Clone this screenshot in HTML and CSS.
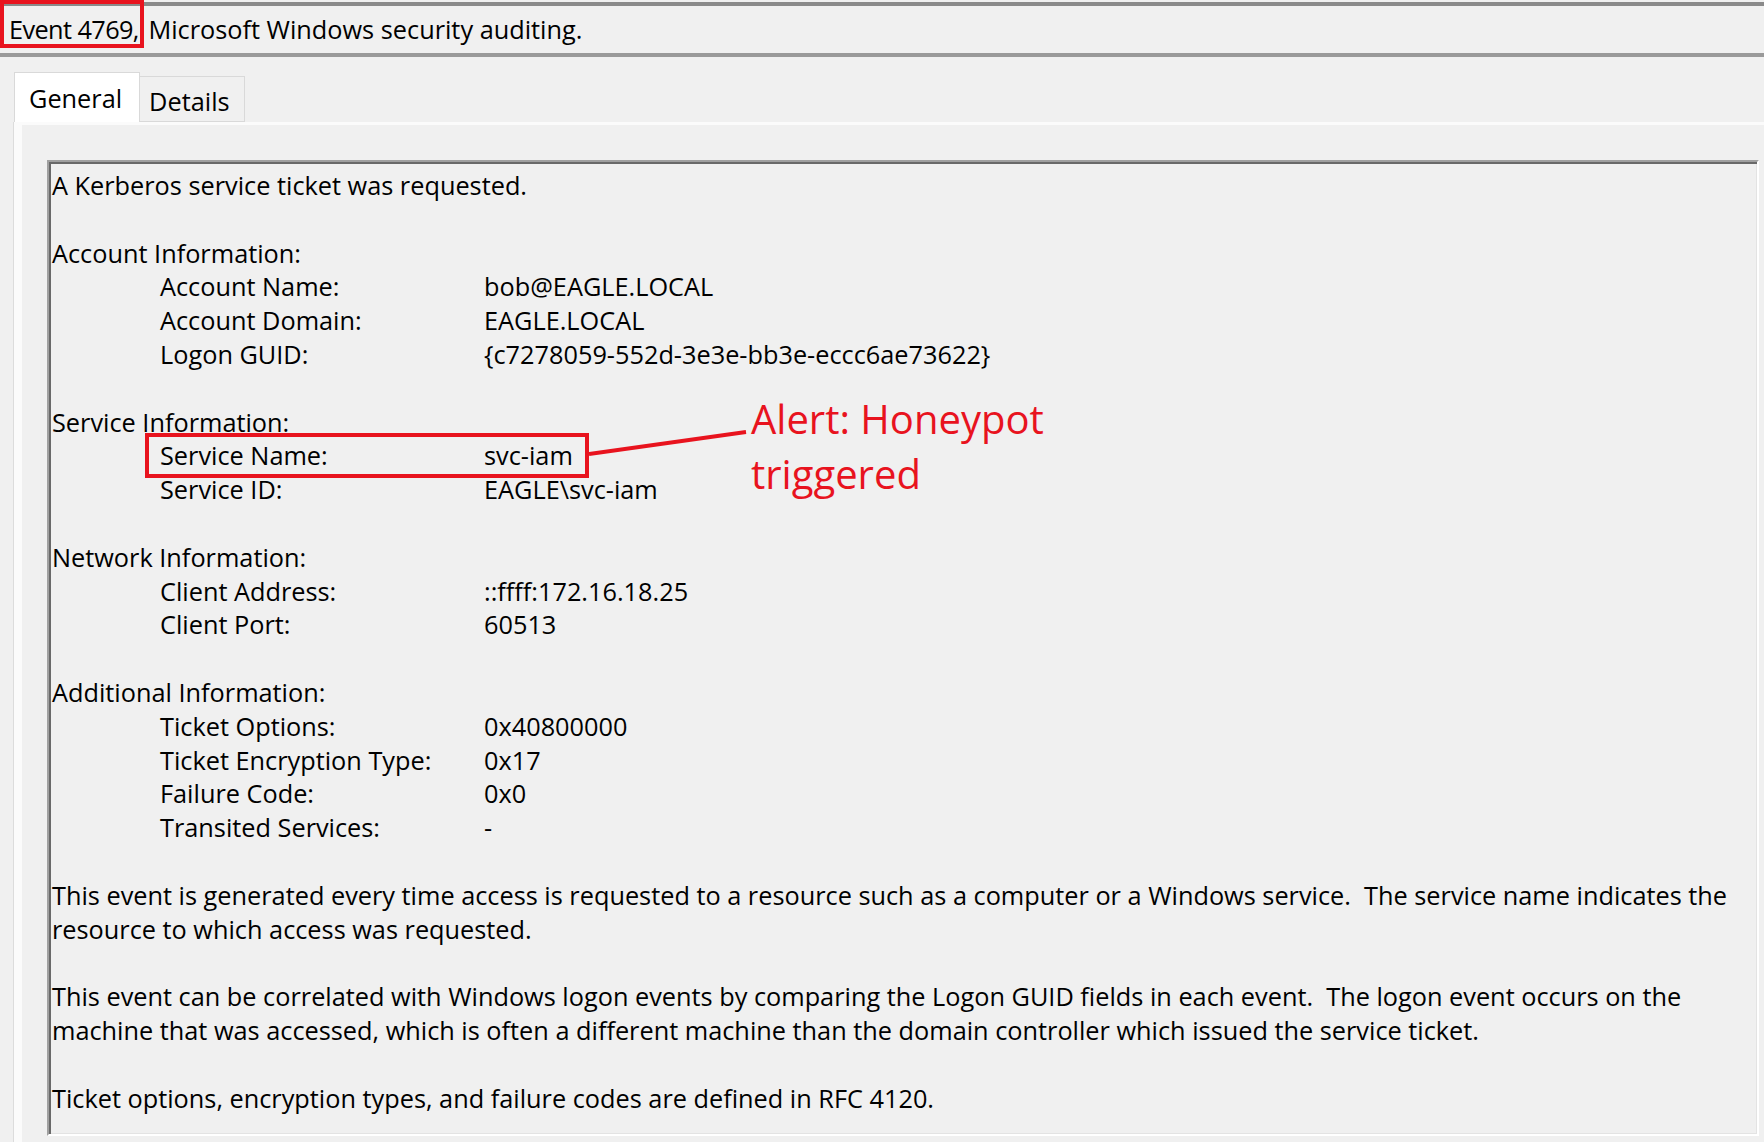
FILE: index.html
```html
<!DOCTYPE html>
<html lang="en">
<head>
    <meta charset="UTF-8">
    <title>Event 4769 - Properties</title>
    <link rel="stylesheet" href="styles.css">
</head>
<body>
    <div class="caption">
        <span class="event-id">Event 4769,</span> Microsoft Windows security auditing.
        <div class="mark"></div>
    </div>

    <div class="tabs">
        <div class="tab active">General</div>
        <div class="tab">Details</div>
    </div>

    <div class="page">
        <div class="panel">
            <div class="msg">
                <div class="line">A Kerberos service ticket was requested.</div>
                <div class="gap"></div>

                <div class="line">Account Information:</div>
                <div class="field"><span>Account Name:</span><span>bob@EAGLE.LOCAL</span></div>
                <div class="field"><span>Account Domain:</span><span>EAGLE.LOCAL</span></div>
                <div class="field"><span>Logon GUID:</span><span>{c7278059-552d-3e3e-bb3e-eccc6ae73622}</span></div>
                <div class="gap"></div>

                <div class="line">Service Information:</div>
                <div class="field flag"><span>Service Name:</span><span>svc-iam</span></div>
                <div class="field"><span>Service ID:</span><span>EAGLE\svc-iam</span></div>
                <div class="gap"></div>

                <div class="line">Network Information:</div>
                <div class="field"><span>Client Address:</span><span>::ffff:172.16.18.25</span></div>
                <div class="field"><span>Client Port:</span><span>60513</span></div>
                <div class="gap"></div>

                <div class="line">Additional Information:</div>
                <div class="field"><span>Ticket Options:</span><span>0x40800000</span></div>
                <div class="field"><span>Ticket Encryption Type:</span><span>0x17</span></div>
                <div class="field"><span>Failure Code:</span><span>0x0</span></div>
                <div class="field"><span>Transited Services:</span><span>-</span></div>
                <div class="gap"></div>

                <div class="line">This event is generated every time access is requested to a resource such as a computer or a Windows service.  The service name indicates the</div>
                <div class="line">resource to which access was requested.</div>
                <div class="gap"></div>

                <div class="line">This event can be correlated with Windows logon events by comparing the Logon GUID fields in each event.  The logon event occurs on the</div>
                <div class="line">machine that was accessed, which is often a different machine than the domain controller which issued the service ticket.</div>
                <div class="gap"></div>

                <div class="line">Ticket options, encryption types, and failure codes are defined in RFC 4120.</div>

                <!-- annotation drawn over the message -->
                <svg class="callout-line" width="160" height="26" viewBox="0 0 160 26">
                    <line x1="0" y1="24" x2="157" y2="2" stroke="#e8131e" stroke-width="4"/>
                </svg>
                <div class="callout">Alert: Honeypot<br>triggered</div>
            </div>
        </div>
    </div>
</body>
</html>
```

FILE: styles.css
```css
body {
    margin: 0;
    background: #f0f0f0;
    font-family: "Open Sans", "Noto Sans", sans-serif;
    font-size: 25.3px;
    color: #000;
    overflow: hidden;
}

.caption {
    position: relative;
    margin-top: 2px;
    height: 47px;
    line-height: 47px;
    padding-left: 9px;
    border-top: 4px solid #8a8a8a;
    border-bottom: 4px solid #9a9a9a;
    white-space: nowrap;
}
.event-id {
    letter-spacing: -0.6px;
    margin-right: 3px;
}
.mark {
    position: absolute;
    left: 0;
    top: -6px;
    width: 144px;
    height: 48px;
    box-sizing: border-box;
    border: 4px solid #e8131e;
}

.tabs {
    display: flex;
    align-items: flex-start;
    margin: 15px 0 0 14px;
}
.tab {
    box-sizing: border-box;
    height: 46px;
    margin-top: 4px;
    padding: 0 14px 0 9px;
    line-height: 48px;
    border: 1px solid #d9d9d9;
    border-left: none;
    background: #f0f0f0;
}
.tab.active {
    height: 50px;
    margin-top: 0;
    padding: 0 17px 0 14px;
    line-height: 50px;
    border-left: 1px solid #d9d9d9;
    border-bottom: none;
    background: #fff;
}

.page {
    margin-left: 13px;
    padding: 3px 0 0 8px;
    border-left: 1px solid #dcdcdc;
    background: #fbfbfb;
}
.panel {
    padding: 35px 5px 6px 25px;
    background: #f0f0f0;
}

.msg {
    position: relative;
    box-sizing: border-box;
    height: 976px;
    padding: 7px 0 0 3px;
    border-top: 2px solid #a0a0a0;
    border-left: 2px solid #a0a0a0;
    border-right: 2px solid #fff;
    border-bottom: 2px solid #fff;
    box-shadow: inset 2px 2px 0 #696969, inset -1px -1px 0 #e3e3e3;
    overflow: hidden;
}
.line, .gap, .field {
    height: 33.8px;
    line-height: 33.8px;
    white-space: pre;
}
.field {
    position: relative;
    display: grid;
    grid-template-columns: 324px auto;
    padding-left: 108px;
}

/* red box round the service name */
.flag::after {
    content: '';
    position: absolute;
    left: 93px;
    top: -6px;
    width: 444px;
    height: 45px;
    box-sizing: border-box;
    border: 4px solid #e8131e;
}
.callout-line {
    position: absolute;
    left: 540px;
    top: 268px;
}
.callout {
    position: absolute;
    left: 702px;
    top: 229px;
    font-size: 40px;
    line-height: 55px;
    color: #e8131e;
}
```
